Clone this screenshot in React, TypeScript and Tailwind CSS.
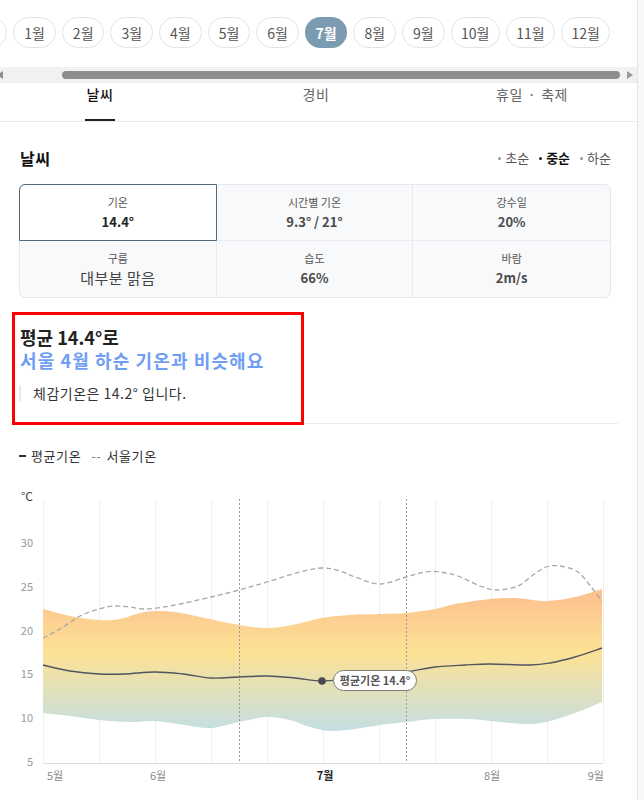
import React from "react";

type Pt = [number, number];

const months = ["1월", "2월", "3월", "4월", "5월", "6월", "7월", "8월", "9월", "10월", "11월", "12월"];

const cells = [
  { label: "기온", value: "14.4°", active: true },
  { label: "시간별 기온", value: "9.3° / 21°" },
  { label: "강수일", value: "20%" },
  { label: "구름", value: "대부분 맑음", big: true },
  { label: "습도", value: "66%" },
  { label: "바람", value: "2m/s" },
];

const upper: Pt[] = [[43,609],[70,616],[99,620],[120,619],[140,613],[155,611],[175,612],[205,618],[239,625],[267,628],[292,625],[322,618],[350,615],[380,614],[406,613],[435,609],[455,604],[490,599],[515,598],[546,601],[575,597],[602,589]];
const lower: Pt[] = [[43,713],[70,716],[99,720],[130,722],[155,721],[185,725],[211,728],[239,722],[267,717],[290,720],[310,727],[330,731],[355,729],[380,725],[406,722],[435,719],[470,719],[500,722],[530,724],[550,721],[575,713],[602,702]];
const avg: Pt[] = [[43,665],[70,671],[99,674],[125,674],[155,672],[183,674],[211,678],[239,677],[267,676],[295,678],[322,681],[350,678],[380,674],[406,672],[435,667],[465,665],[490,664],[530,665],[550,663],[575,657],[602,648]];
const seoul: Pt[] = [[43,638],[60,629],[80,616],[99,609],[115,606],[130,607],[145,609],[170,606],[211,597],[239,590],[267,582],[300,572],[322,568],[340,571],[355,577],[380,584],[406,577],[425,572],[440,572],[458,576],[480,586],[497,590],[518,586],[533,575],[546,567],[560,566],[578,572],[592,588],[602,601]];

function curve(pts: Pt[], move = true) {
  let d = move ? `M${pts[0][0]},${pts[0][1]}` : `L${pts[0][0]},${pts[0][1]}`;
  for (let i = 0; i < pts.length - 1; i++) {
    const p0 = pts[i - 1] ?? pts[i];
    const p1 = pts[i];
    const p2 = pts[i + 1];
    const p3 = pts[i + 2] ?? p2;
    const c1x = p1[0] + (p2[0] - p0[0]) / 6;
    const c1y = p1[1] + (p2[1] - p0[1]) / 6;
    const c2x = p2[0] - (p3[0] - p1[0]) / 6;
    const c2y = p2[1] - (p3[1] - p1[1]) / 6;
    d += ` C${c1x.toFixed(1)},${c1y.toFixed(1)} ${c2x.toFixed(1)},${c2y.toFixed(1)} ${p2[0]},${p2[1]}`;
  }
  return d;
}

function TempChart() {
  const band = curve(upper) + " " + curve([...lower].reverse(), false) + " Z";
  const grid = Array.from({ length: 11 }, (_, i) => 43 + i * 56);
  const ticks = [30, 25, 20, 15, 10, 5];

  return (
    <svg width="638" height="310" viewBox="0 480 638 310" className="mt-[14px] block">
      <defs>
        <linearGradient id="band" gradientUnits="userSpaceOnUse" x1="0" y1="595" x2="0" y2="732">
          <stop offset="0" stopColor="#fcc28f" />
          <stop offset="0.42" stopColor="#fde294" />
          <stop offset="1" stopColor="#c3dfe4" />
        </linearGradient>
      </defs>
      <text x="33" y="501" textAnchor="end" fontSize="12" fill="#444">°C</text>
      {ticks.map((t) => (
        <text key={t} x="33" y={762 - (t - 5) * 8.76 + 4} textAnchor="end" fontSize="11" fill="#999">
          {t}
        </text>
      ))}
      {grid.map((x) => (
        <line key={x} x1={x + 0.5} x2={x + 0.5} y1="499" y2="763" stroke="#efefef" />
      ))}
      <path d={band} fill="url(#band)" />
      <line x1="43" x2="603" y1="763.5" y2="763.5" stroke="#dddddd" />
      <line x1="239.5" x2="239.5" y1="499" y2="763" stroke="#9a9a9a" strokeDasharray="2 2" />
      <line x1="406.5" x2="406.5" y1="499" y2="763" stroke="#9a9a9a" strokeDasharray="2 2" />
      <path d={curve(seoul)} fill="none" stroke="#a8a8a8" strokeWidth="1.3" strokeDasharray="5 3" />
      <path d={curve(avg)} fill="none" stroke="#505560" strokeWidth="1.4" />
      <circle cx="322" cy="681" r="3.8" fill="#454a52" />
      <rect x="333.5" y="670.5" width="83" height="20" rx="10" fill="#fff" stroke="#7a7a7a" />
      <text x="375" y="684.5" textAnchor="middle" fontSize="11" fontWeight="600" fill="#555">
        평균기온 14.4°
      </text>
      <text x="47" y="780" fontSize="11" fill="#8a8a8a">5월</text>
      <text x="158" y="780" textAnchor="middle" fontSize="11" fill="#8a8a8a">6월</text>
      <text x="325" y="780" textAnchor="middle" fontSize="11" fontWeight="700" fill="#222">7월</text>
      <text x="492" y="780" textAnchor="middle" fontSize="11" fill="#8a8a8a">8월</text>
      <text x="604" y="780" textAnchor="end" fontSize="11" fill="#8a8a8a">9월</text>
    </svg>
  );
}

export default function App() {
  return (
    <div className="min-h-screen bg-[#f7f8fa] font-['Noto_Sans_CJK_KR','Noto_Sans',sans-serif]">
      <div className="min-h-[800px] w-[638px] overflow-hidden border-r border-[#e4e6ea] bg-white">
        {/* month pills */}
        <div className="ml-[-35.3px] flex gap-[6px] pt-[17px]">
          <div className="h-[31px] w-[42.6px] flex-none rounded-full border border-[#e3e3e3]" />
          {months.map((m) => {
            const active = m === "7월";
            return (
              <div
                key={m}
                className={`flex h-[31px] flex-none items-center justify-center rounded-full text-[14px] leading-[20px] ${
                  m.length > 2 ? "w-[49.2px]" : "w-[42.6px]"
                } ${active ? "bg-[#7a9bb0] font-bold text-white" : "border border-[#e3e3e3] text-[#555]"}`}
              >
                {m}
              </div>
            );
          })}
        </div>

        {/* scrollbar */}
        <div className="mt-[19px] flex h-[15px] items-center bg-[#f1f1f1]">
          <div className="ml-[-3px] h-0 w-0 border-y-[4px] border-r-[6px] border-y-transparent border-r-[#8f8f8f]" />
          <div className="ml-[59px] h-[8px] w-[558px] rounded-full bg-[#8d8d8d]" />
          <div className="ml-[7px] h-0 w-0 border-y-[4px] border-l-[6px] border-y-transparent border-l-[#9a9a9a]" />
        </div>

        {/* tabs */}
        <div className="flex border-y border-[#ebebeb]">
          <div className="ml-[-8px] flex">
            <div className="relative flex h-[38px] w-[216px] justify-center pt-[1px]">
              <span className="text-[14px] font-medium leading-[20px] tracking-[0.5px] text-[#111]">날씨</span>
              <span className="absolute bottom-0 h-[2px] w-[30px] bg-[#222]" />
            </div>
            <div className="flex h-[38px] w-[216px] justify-center pt-[1px]">
              <span className="text-[14px] leading-[20px] tracking-[0.5px] text-[#666]">경비</span>
            </div>
            <div className="flex h-[38px] w-[216px] justify-center pt-[1px] text-[14px] leading-[20px] tracking-[0.5px] text-[#666]">
              <span>휴일</span>
              <span className="mx-[5px]">·</span>
              <span>축제</span>
            </div>
          </div>
        </div>

        {/* heading */}
        <div className="ml-[19px] mt-[24px] flex w-[592px] items-center justify-between">
          <h2 className="pl-px text-[16px] font-bold leading-[24px] tracking-[0.5px] text-[#111]">날씨</h2>
          <div className="flex items-center gap-[10px] text-[13px] leading-[20px]">
            <span className="flex items-center gap-[4px] text-[#555]">
              <span className="h-[3px] w-[3px] rounded-full bg-[#999]" />초순
            </span>
            <span className="flex items-center gap-[4px] font-bold text-[#111]">
              <span className="h-[3px] w-[3px] rounded-full bg-[#222]" />중순
            </span>
            <span className="flex items-center gap-[4px] text-[#555]">
              <span className="h-[3px] w-[3px] rounded-full bg-[#999]" />하순
            </span>
          </div>
        </div>

        {/* table */}
        <div className="ml-[19px] mt-[14px] grid w-[592px] grid-cols-3 rounded-[6px] border border-[#e6e8ec] bg-[#f8f9fb]">
          {cells.map((c, i) => (
            <div
              key={c.label}
              className={`relative flex h-[56px] flex-col items-center justify-center gap-[4px] ${
                i % 3 !== 2 ? "border-r border-[#e9ebee]" : ""
              } ${i < 3 ? "border-b border-[#e9ebee]" : ""} ${c.active ? "rounded-tl-[6px] bg-white" : ""}`}
            >
              {c.active && (
                <span className="absolute -inset-px rounded-tl-[6px] border border-[#506a7b]" />
              )}
              <span className="text-[11px] leading-[14px] text-[#555]">{c.label}</span>
              <span
                className={
                  c.big
                    ? "text-[15px] leading-[18px] tracking-[0.5px] text-[#444]"
                    : `text-[13px] font-semibold leading-[18px] ${c.active ? "text-[#222]" : "text-[#4a4a4a]"}`
                }
              >
                {c.value}
              </span>
            </div>
          ))}
        </div>

        {/* summary */}
        <div className="relative">
          <div className="mx-[19px] border-b border-[#ececec] pb-[20px] pt-[28px]">
            <p className="pl-px text-[18px] font-bold leading-[23px] text-[#222]">평균 14.4°로</p>
            <p className="pl-px text-[18px] font-bold leading-[23px] tracking-[1.1px] text-[#6f9ef3]">
              서울 4월 하순 기온과 비슷해요
            </p>
            <div className="mt-[11px] flex items-center gap-[12px]">
              <span className="h-[16px] w-[2px] bg-[#e8e9ee]" />
              <span className="text-[14px] leading-[20px] tracking-[0.5px] text-[#333]">체감기온은 14.2° 입니다.</span>
            </div>
          </div>
          <div className="pointer-events-none absolute left-[12px] top-[14px] h-[113px] w-[292px] border-[3px] border-[#ff0000]" />
        </div>

        {/* legend */}
        <div className="ml-[19px] mt-[22px] flex items-center text-[13px] leading-[20px] tracking-[0.6px] text-[#333]">
          <span className="mr-[5px] h-[2px] w-[7px] bg-[#333]" />
          <span>평균기온</span>
          <span className="ml-[10px] mr-[5px] text-[#888]">--</span>
          <span>서울기온</span>
        </div>

        <TempChart />
      </div>
    </div>
  );
}
